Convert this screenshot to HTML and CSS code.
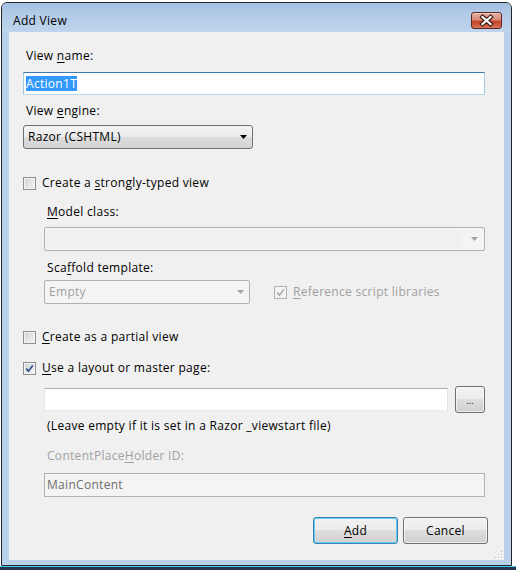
FILE: index.html
```html
<!DOCTYPE html>
<html lang="en">
<head>
  <meta charset="UTF-8" />
  <title>Add View</title>
  <link rel="stylesheet" href="styles.css">
</head>
<body>
  <div class="window">
    <div class="titlebar">
      <span class="title">Add View</span>
      <button class="close" title="Close">
        <svg width="29" height="15" viewBox="0 0 29 15">
          <path d="M10.5 4 L18.5 11 M18.5 4 L10.5 11" stroke="#3b1a14" stroke-width="4.4" stroke-linecap="square" fill="none"/>
          <path d="M10.5 4 L18.5 11 M18.5 4 L10.5 11" stroke="#fff" stroke-width="2.2" stroke-linecap="square" fill="none"/>
        </svg>
      </button>
    </div>

    <div class="client">
      <label class="label name-label">View <u>n</u>ame:</label>
      <div class="textbox focused"><span class="selected">Action1T</span></div>

      <label class="label engine-label">View <u>e</u>ngine:</label>
      <div class="combo engine">
        <span class="combo-text">Razor (CSHTML)</span>
        <svg class="arrow" width="7" height="4" viewBox="0 0 7 4"><polygon points="0,0 7,0 3.5,4" fill="#000"/></svg>
      </div>

      <div class="check-row typed-row">
        <span class="check"></span>
        <span>Create a <u>s</u>trongly-typed view</span>
      </div>

      <div class="group">
        <label class="label model-label"><u>M</u>odel class:</label>
        <div class="combo disabled model">
          <span class="edit"></span>
          <svg class="arrow" width="7" height="4" viewBox="0 0 7 4"><polygon points="0,0 7,0 3.5,4" fill="#a3a3a3"/></svg>
        </div>

        <label class="label scaffold-label">Sca<u>f</u>fold template:</label>
        <div class="scaffold-row">
          <div class="combo disabled scaffold">
            <span class="combo-text">Empty</span>
            <svg class="arrow" width="7" height="4" viewBox="0 0 7 4"><polygon points="0,0 7,0 3.5,4" fill="#a3a3a3"/></svg>
          </div>
          <div class="check-row muted ref-check">
            <span class="check disabled">
              <svg width="11" height="11" viewBox="0 0 11 11"><path d="M2.2 5.6 L4.4 8.2 L8.8 2.4" stroke="#a8a8a8" stroke-width="1.5" fill="none"/></svg>
            </span>
            <span><u>R</u>eference script libraries</span>
          </div>
        </div>
      </div>

      <div class="check-row partial-row">
        <span class="check"></span>
        <span><u>C</u>reate as a partial view</span>
      </div>

      <div class="check-row layout-row">
        <span class="check">
          <svg width="11" height="11" viewBox="0 0 11 11"><path d="M2.2 5.6 L4.4 8.2 L8.8 2.4" stroke="#2c4a87" stroke-width="1.6" fill="none"/></svg>
        </span>
        <span><u>U</u>se a layout or master page:</span>
      </div>

      <div class="group">
        <div class="browse-row">
          <div class="textbox layout-path"></div>
          <button class="btn browse">...</button>
        </div>
        <p class="hint">(Leave empty if it is set in a Razor _viewstart file)</p>

        <label class="label muted holder-label">ContentPlace<u>H</u>older ID:</label>
        <div class="textbox disabled">MainContent</div>
      </div>

      <div class="actions">
        <button class="btn default"><u>A</u>dd</button>
        <button class="btn">Cancel</button>
      </div>

      <svg class="grip" width="10" height="10" viewBox="0 0 10 10">
        <rect x="8" y="2" width="1" height="1" fill="#b8b8b8"/>
        <rect x="5" y="5" width="1" height="1" fill="#b8b8b8"/>
        <rect x="8" y="5" width="1" height="1" fill="#b8b8b8"/>
        <rect x="2" y="8" width="1" height="1" fill="#b8b8b8"/>
        <rect x="5" y="8" width="1" height="1" fill="#b8b8b8"/>
        <rect x="8" y="8" width="1" height="1" fill="#b8b8b8"/>
        <rect x="9" y="3" width="1" height="1" fill="#fff"/>
        <rect x="6" y="6" width="1" height="1" fill="#fff"/>
        <rect x="9" y="6" width="1" height="1" fill="#fff"/>
        <rect x="3" y="9" width="1" height="1" fill="#fff"/>
        <rect x="6" y="9" width="1" height="1" fill="#fff"/>
        <rect x="9" y="9" width="1" height="1" fill="#fff"/>
      </svg>
    </div>
  </div>
  <div class="taskbar"></div>
</body>
</html>
```

FILE: styles.css
```css
* {
  box-sizing: border-box;
}
body {
  margin: 0;
  background: #fff;
  font-family: "Open Sans", "Noto Sans", sans-serif;
  font-size: 12px;
  line-height: 16px;
  letter-spacing: 0.3px;
  color: #000;
}
u {
  text-underline-offset: 2px;
}

/* Window frame */
.window {
  width: 511px;
  height: 564px;
  margin: 2px 0 0 1px;
  border: 1px solid #262626;
  border-radius: 6px 6px 0 0;
  background: #b9d1ea;
  padding: 0 7px 5px;
  display: flex;
  flex-direction: column;
}
.titlebar {
  height: 29px;
  margin: 0 -7px;
  padding: 9px 9px 0 11px;
  display: flex;
  align-items: flex-start;
  justify-content: space-between;
  border-radius: 5px 5px 0 0;
  background: linear-gradient(#a3bfdf, #b4cce8 45%, #bed4ec);
}
.title {
  margin-top: 1px;
}
.close {
  width: 31px;
  height: 17px;
  padding: 0;
  border: 1px solid #5d2722;
  border-radius: 3px;
  background: linear-gradient(#e6ab9f, #d98b79 48%, #c3452b 52%, #cd5a3f 80%, #d9785d);
  box-shadow: inset 0 1px 0 rgba(255, 255, 255, 0.45);
  display: flex;
}
.taskbar {
  height: 5px;
  border-top: 1px solid #3fcff0;
  background: #26334d;
}

/* Dialog body */
.client {
  position: relative;
  flex: 1;
  background: #f0f0f0;
  padding: 0 19px 0 14px;
}
.label {
  display: block;
  padding-left: 3px;
}
.muted {
  color: #a0a0a0;
}
.name-label { margin-top: 16px; }
.engine-label { margin-top: 8px; }
.model-label { margin-top: 13px; }
.scaffold-label { margin-top: 9px; }
.holder-label { margin-top: 14px; }

.textbox {
  height: 23px;
  background: #fff;
  border: 1px solid;
  border-color: #abadb3 #e2e3ea #e3e9ef #e2e3ea;
  padding: 0 2px;
  display: flex;
  align-items: center;
}
.textbox.focused {
  margin-top: 8px;
  border-color: #3d7bad #a4c9e3 #b7d9ed #a4c9e3;
}
.textbox.disabled {
  height: 24px;
  margin-top: 9px;
  background: #f4f4f4;
  border-color: #adb2b5;
  color: #6d6d6d;
}
.selected {
  background: #3399ff;
  color: #fff;
  line-height: 15px;
}

.combo {
  height: 24px;
  border: 1px solid #707070;
  border-radius: 3px;
  background: linear-gradient(#f3f3f3, #ebebeb 50%, #dedede 50%, #d2d2d2);
  padding: 0 3px 0 4px;
  display: flex;
  align-items: center;
}
.combo-text {
  flex: 1;
}
.combo .arrow {
  margin-right: 2px;
}
.engine {
  width: 230px;
  margin-top: 6px;
}
.combo.disabled {
  border-color: #adb2b5;
  border-radius: 2px;
  background: #f4f4f4;
  color: #a0a0a0;
}
.model {
  margin-top: 7px;
  padding: 2px 4px 2px 2px;
  align-items: stretch;
}
.model .edit {
  flex: 1;
  background: #f0f0f0;
  margin-right: 10px;
}
.model .arrow {
  align-self: center;
}
.scaffold {
  width: 206px;
}

.check-row {
  display: flex;
  align-items: center;
  gap: 6px;
}
.check {
  width: 13px;
  height: 13px;
  border: 1px solid #8e8f8f;
  background: linear-gradient(135deg, #cdd0d4, #f7f7f7);
  box-shadow: inset 0 0 0 1px #f4f4f4;
  display: flex;
}
.check.disabled {
  border-color: #b1b1b1;
  background: #f4f4f4;
}
.typed-row { margin-top: 26px; }
.partial-row { margin-top: 25px; }
.layout-row { margin-top: 15px; }

.group {
  margin-left: 21px;
}
.scaffold-row {
  margin-top: 4px;
  display: flex;
  align-items: center;
}
.ref-check {
  margin-left: 24px;
}

.browse-row {
  margin-top: 10px;
  display: flex;
  align-items: center;
  gap: 7px;
}
.layout-path {
  flex: 1;
}
.hint {
  margin: 5px 0 0;
  padding-left: 3px;
}

.btn {
  font: inherit;
  letter-spacing: inherit;
  color: #000;
  height: 27px;
  padding: 0;
  border: 1px solid #707070;
  border-radius: 3px;
  background: linear-gradient(#f3f3f3, #ebebeb 50%, #dedede 50%, #d0d0d0);
  box-shadow: inset 0 0 0 1px rgba(255, 255, 255, 0.6);
}
.browse {
  width: 30px;
  font-size: 9px;
  letter-spacing: 0;
  padding-top: 3px;
}
.actions {
  margin: 20px -3px 0 0;
  display: flex;
  justify-content: flex-end;
  gap: 5px;
}
.actions .btn {
  width: 85px;
}
.btn.default {
  border-color: #3c7fb1;
  box-shadow: inset 0 0 0 1px #5fd0f5;
}
.grip {
  position: absolute;
  right: 1px;
  bottom: 1px;
}
```
